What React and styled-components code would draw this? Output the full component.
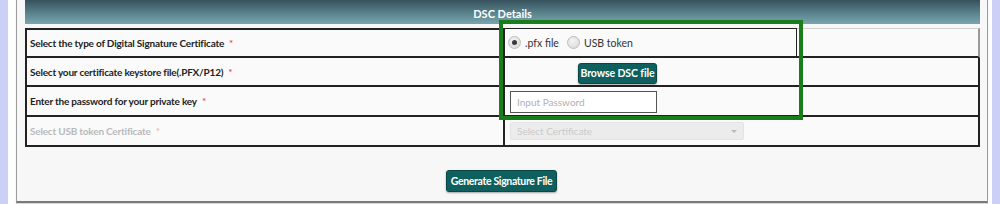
import React from 'react'
import styled, { createGlobalStyle } from 'styled-components'

const GlobalStyle = createGlobalStyle`
    html, body {
        margin: 0;
        padding: 0;
        background: #ffffff;
    }
    body {
        font-family: Lato, "Open Sans", "Liberation Sans", sans-serif;
    }
`

const rows = [
    { label: 'Select the type of Digital Signature Certificate', kind: 'radio' },
    { label: 'Select your certificate keystore file(.PFX/P12)', kind: 'file' },
    { label: 'Enter the password for your private key', kind: 'password' },
    { label: 'Select USB token Certificate', kind: 'select', disabled: true },
]

const Field = ({ kind }) => {
    if (kind === 'radio') {
        return (
            <RadioBox>
                <RadioOption>
                    <Radio $checked />
                    .pfx file
                </RadioOption>
                <RadioOption>
                    <Radio />
                    USB token
                </RadioOption>
            </RadioBox>
        )
    }
    if (kind === 'file') return <BrowseButton>Browse DSC file</BrowseButton>
    if (kind === 'password') return <PasswordInput type="password" placeholder="Input Password" />
    return (
        <SelectBox>
            Select Certificate
            <Caret />
        </SelectBox>
    )
}

const App = () => {
    return (
        <Page>
            <GlobalStyle />
            <SideStrip />
            <Panel>
                <Header>DSC Details</Header>
                <Table>
                    {rows.map((row, i) => (
                        <React.Fragment key={row.label}>
                            <LabelCell $first={i === 0} $disabled={row.disabled}>
                                {row.label}
                                <Required $disabled={row.disabled}>*</Required>
                            </LabelCell>
                            <FieldCell $first={i === 0} $faint={row.kind === 'radio'}>
                                <Field kind={row.kind} />
                            </FieldCell>
                        </React.Fragment>
                    ))}
                </Table>
                <Footer>
                    <GenerateButton>Generate Signature File</GenerateButton>
                </Footer>
            </Panel>
            <SideStrip $right />
            <Highlight />
        </Page>
    )
}

export default App

const Page = styled.div`
    position: relative;
    display: flex;
    height: 204px;
    overflow: hidden;
`

const SideStrip = styled.div`
    width: 8px;
    flex-shrink: 0;
    background: #cdd0f6;
    margin-left: ${({ $right }) => ($right ? '4px' : '0')};
`

const Panel = styled.div`
    box-sizing: border-box;
    width: 972px;
    height: 203px;
    margin-left: 8px;
    padding: 0 7px 0 8px;
    background: #f7f7f7;
    border-left: 1px solid #9c9c9c;
    border-right: 1px solid #9c9c9c;
    border-bottom: 2px solid #7a7a7a;
    box-shadow: 0 1px 1px rgba(0, 0, 0, 0.15);
`

const Header = styled.div`
    height: 24px;
    display: flex;
    align-items: center;
    justify-content: center;
    padding-top: 2px;
    box-sizing: border-box;
    background: linear-gradient(#35525d, #5d8791 60%, #79a6ae);
    color: #ffffff;
    font-weight: 700;
    font-size: 11px;
`

const Table = styled.div`
    display: grid;
    grid-template-columns: 478px 1fr;
    grid-template-rows: 30px 29px 30px 30px;
    margin-top: 4px;
    border-left: 2px solid #222;
    background: #fafafa;
`

const Cell = styled.div`
    display: flex;
    align-items: center;
    box-sizing: border-box;
    border-bottom: 2px solid #222;
    border-right: 2px solid #222;
    border-top: ${({ $first }) => ($first ? '2px solid #222' : 'none')};
`

const LabelCell = styled(Cell)`
    padding-left: 3px;
    font-size: 10px;
    letter-spacing: -0.2px;
    font-weight: 700;
    color: ${({ $disabled }) => ($disabled ? '#b9b9b9' : '#222222')};
`

const Required = styled.span`
    margin-left: 5px;
    color: ${({ $disabled }) => ($disabled ? '#f0a8a8' : '#e03030')};
    font-weight: 400;
`

const FieldCell = styled(Cell)`
    padding-left: ${({ $faint }) => ($faint ? '0' : '5px')};
    border-top: ${({ $first, $faint }) =>
        $faint ? '1px solid #cfcfcf' : $first ? '2px solid #222' : 'none'};
    border-right-color: ${({ $faint }) => ($faint ? '#9a9a9a' : '#222')};
    align-items: ${({ $faint }) => ($faint ? 'stretch' : 'center')};
`

const RadioBox = styled.div`
    display: flex;
    align-items: center;
    gap: 8px;
    width: 292px;
    padding-left: 3px;
    box-sizing: border-box;
    border-top: 1px solid #222;
    border-right: 1px solid #222;
    margin-top: -1px;
    font-size: 10.5px;
    color: #333;
`

const RadioOption = styled.label`
    display: flex;
    align-items: center;
    gap: 4px;
`

const Radio = styled.span`
    position: relative;
    width: 11px;
    height: 11px;
    border-radius: 50%;
    border: 1px solid #bdbdbd;
    background: radial-gradient(circle at 40% 35%, #f4f4f4, #d6d6d6);

    &::after {
        content: '';
        display: ${({ $checked }) => ($checked ? 'block' : 'none')};
        position: absolute;
        left: 3px;
        top: 3px;
        width: 5px;
        height: 5px;
        border-radius: 50%;
        background: #3a3a3a;
    }
`

const TealButton = styled.button`
    height: 22px;
    padding: 0 8px;
    background: #0e5f5e;
    border: 1px solid #094846;
    border-radius: 3px;
    box-shadow: 0 1px 2px rgba(0, 0, 0, 0.35);
    color: #ffffff;
    font-family: Lato, "Open Sans", sans-serif;
    font-weight: 700;
    font-size: 10.5px;
    letter-spacing: -0.1px;
`

const BrowseButton = styled(TealButton)`
    width: 79px;
    height: 21px;
    padding: 0;
    margin-left: 68px;
    margin-top: 3px;
`

const PasswordInput = styled.input`
    box-sizing: border-box;
    width: 147px;
    height: 22px;
    margin-top: 2px;
    padding: 0 6px;
    border: 1px solid #555;
    background: #fff;
    font-family: Lato, "Open Sans", sans-serif;
    font-size: 10px;
    outline: none;

    &::placeholder {
        color: #b0b0b0;
    }
`

const SelectBox = styled.div`
    position: relative;
    box-sizing: border-box;
    width: 234px;
    height: 18px;
    display: flex;
    align-items: center;
    padding-left: 6px;
    background: #ececec;
    border: 1px solid #e2e2e2;
    border-radius: 2px;
    font-size: 10px;
    color: #cacaca;
`

const Caret = styled.span`
    position: absolute;
    right: 6px;
    top: 7px;
    border-left: 3px solid transparent;
    border-right: 3px solid transparent;
    border-top: 3px solid #b9b9b9;
`

const Footer = styled.div`
    display: flex;
    justify-content: center;
    padding-top: 23px;
    padding-right: 2px;
`

const GenerateButton = styled(TealButton)`
    width: 111px;
    padding: 0;
    letter-spacing: -0.35px;
`

const Highlight = styled.div`
    position: absolute;
    left: 499px;
    top: 20px;
    width: 304px;
    height: 100px;
    box-sizing: border-box;
    border: 4px solid #1a7d1c;
    pointer-events: none;
`
